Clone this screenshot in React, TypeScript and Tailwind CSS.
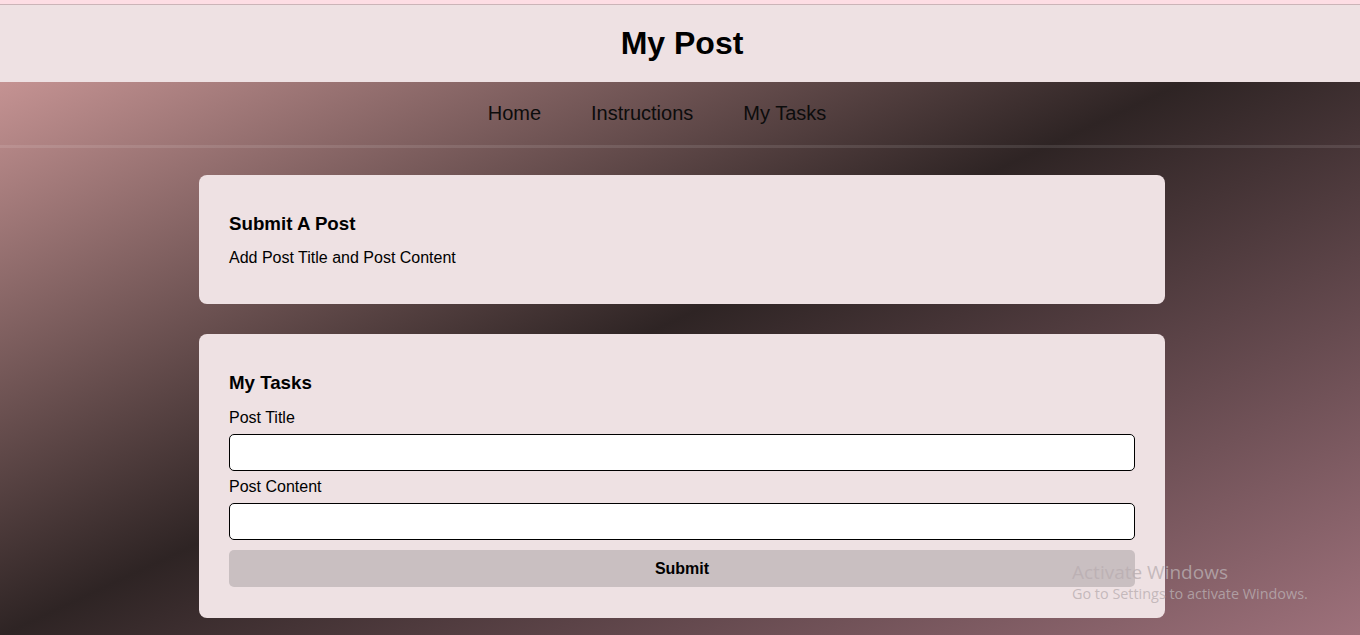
import React from "react";

const links = ["Home", "Instructions", "My Tasks"];

const Field: React.FC<{ label: string }> = ({ label }) => {
  return (
    <div className="flex flex-col">
      <label className="text-[16px] leading-[18px] text-black">{label}</label>
      <input
        type="text"
        className="mt-[7px] h-[37px] w-full rounded-[5px] border border-black bg-white px-2 outline-none"
      />
    </div>
  );
};

const App: React.FC = () => {
  return (
    <div
      className="relative min-h-screen bg-[linear-gradient(to_bottom_right,#dba3a3,#2e2424_50%,#9e717b)] pl-[4px] text-black"
      style={{ fontFamily: '"Liberation Sans", Arial, sans-serif' }}
    >
      <div className="-ml-[4px] h-[4px] bg-[#fddde4]" />
      <header className="-ml-[4px] flex h-[78px] items-center justify-center border-t border-[#cbb4b8] bg-[#eee1e3] pl-[4px]">
        <h1 className="text-[32px] font-bold leading-[37px]">My Post</h1>
      </header>

      <nav className="-ml-[4px] flex h-[66px] items-center justify-center border-b-[3px] border-white/10 pl-[4px]">
        <ul className="flex pt-[2px]">
          {links.map((l) => (
            <li key={l} className="mr-[50px]">
              <a href="#" className="text-[20px] leading-[23px] text-[#0c0c0c]">
                {l}
              </a>
            </li>
          ))}
        </ul>
      </nav>

      <main className="mx-auto flex w-[966px] flex-col gap-[30px] pt-[27px] pb-[18px]">
        <section className="rounded-[8px] bg-[#eee1e3] px-[30px] pt-[38px] pb-[37px]">
          <h3 className="text-[18.72px] font-bold leading-[22px]">Submit A Post</h3>
          <p className="mt-[14px] text-[16px] leading-[18px]">Add Post Title and Post Content</p>
        </section>

        <section className="rounded-[8px] bg-[#eee1e3] px-[30px] pt-[38px] pb-[31px]">
          <h3 className="text-[18.72px] font-bold leading-[22px]">My Tasks</h3>
          <div className="mt-[15px] flex flex-col gap-[7px]">
            <Field label="Post Title" />
            <Field label="Post Content" />
          </div>
          <button className="mt-[10px] h-[37px] w-full rounded-[5px] bg-[#c9bfc1] text-[16px] font-bold text-black">
            Submit
          </button>
        </section>
      </main>

      <div
        className="pointer-events-none absolute left-[1072px] top-[559px] text-[#b9aeb1]/80"
        style={{ fontFamily: '"Open Sans", "Noto Sans", sans-serif' }}
      >
        <div className="text-[19px] leading-[26px]">Activate Windows</div>
        <div className="text-[14.4px] leading-[18px]">Go to Settings to activate Windows.</div>
      </div>
    </div>
  );
};

export default App;
